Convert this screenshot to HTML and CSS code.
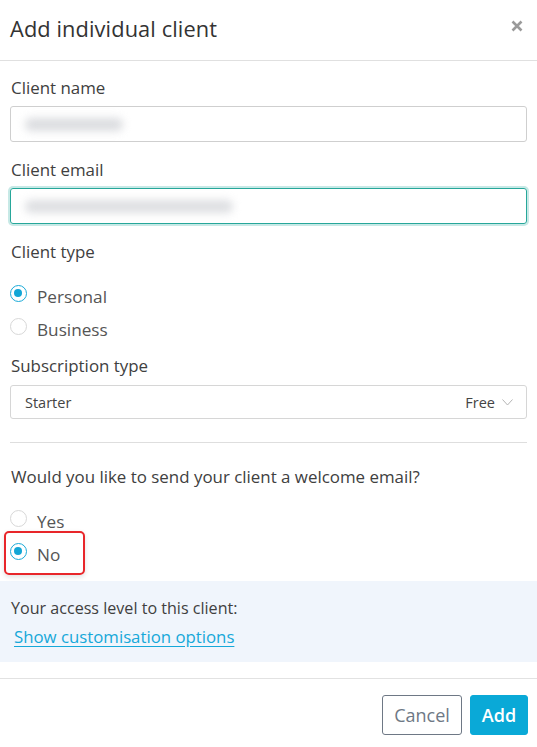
FILE: index.html
```html
<!DOCTYPE html>
<html>
<head>
<meta charset="utf-8">
<link rel="stylesheet" href="styles.css">
</head>
<body>
<div class="modal">
  <div class="header">
    <h1 class="title">Add individual client</h1>
    <svg class="close" width="12" height="12" viewBox="0 0 12 12"><path d="M1.5 1.5L10.5 10.5M10.5 1.5L1.5 10.5" stroke="#9a9a9a" stroke-width="2.6" stroke-linecap="butt"/></svg>
  </div>
  <div class="body">
    <div class="label first">Client name</div>
    <div class="input"><span class="blur short"></span></div>
    <div class="label">Client email</div>
    <div class="input focus"><span class="blur long"></span></div>
    <div class="label">Client type</div>
    <div class="radios">
      <div class="radio-row"><span class="radio on"></span><span class="rlabel">Personal</span></div>
      <div class="radio-row"><span class="radio"></span><span class="rlabel">Business</span></div>
    </div>
    <div class="label sub">Subscription type</div>
    <div class="select">
      <span class="sel-val">Starter</span>
      <span class="sel-right">Free <svg class="chev" width="11" height="7" viewBox="0 0 11 7"><path d="M0.5 0.5L5.5 6L10.5 0.5" fill="none" stroke="#b5b5b5" stroke-width="1"/></svg></span>
    </div>
    <div class="rule"></div>
    <div class="label question">Would you like to send your client a welcome email?</div>
    <div class="radios q">
      <div class="radio-row"><span class="radio"></span><span class="rlabel">Yes</span></div>
      <div class="radio-row marked"><span class="radio on"></span><span class="rlabel">No</span><span class="highlight"></span></div>
    </div>
    <div class="panel">
      <div class="panel-text">Your access level to this client:</div>
      <a class="link" href="#">Show customisation options</a>
    </div>
  </div>
  <div class="footer">
    <button class="btn cancel">Cancel</button>
    <button class="btn add">Add</button>
  </div>
</div>
</body>
</html>
```
FILE: styles.css
```css
* { box-sizing: border-box; }
html, body { margin: 0; padding: 0; background: #fff; }
body { font-family: "Open Sans", "Liberation Sans", sans-serif; color: #3a3a3a; }
.modal { width: 537px; height: 747px; background: #fff; }
.header {
  height: 61px;
  border-bottom: 1px solid #e0e0e0;
  display: flex;
  align-items: center;
  justify-content: space-between;
  padding: 0 14px 3px 10px;
}
.title { margin: 0; font-size: 21.8px; font-weight: 400; color: #333; letter-spacing: 0.1px; }
.close { margin-top: -6px; }
.body { padding: 0 10px; }
.label { font-size: 16.9px; line-height: 20px; height: 20px; margin-top: 18px; padding-left: 1px; color: #404040; }
.label.first { margin-top: 17px; }
.input {
  margin-top: 8px;
  height: 36px;
  border: 1px solid #cfcfcf;
  border-radius: 3px;
  display: flex;
  align-items: center;
  padding-left: 10px;
}
.input.focus { border-color: #27a79a; box-shadow: 0 0 0 2px #c7e9e6; }
.blur { display: block; height: 13px; background: #d2d4d8; border-radius: 6px; filter: blur(4px); }
.blur.short { width: 98px; margin-left: 4px; opacity: 0.8; }
.blur.long { width: 208px; margin-left: 4px; opacity: 0.75; }
.radios { margin-top: 18px; }
.radios.q { margin-top: 18px; }
.radio-row { height: 33px; display: flex; align-items: center; position: relative; }
.radio {
  width: 17px; height: 17px;
  border: 1px solid #d8d8d8;
  border-radius: 50%;
  margin-left: 0px;
  margin-top: -6px;
  position: relative;
  flex: none;
  background: #fff;
}
.radio.on { border: 1.5px solid #1aaad8; }
.radio.on::after {
  content: ""; position: absolute; left: 3px; top: 3px; width: 8px; height: 8px;
  border-radius: 50%; background: #12a6d6;
}
.rlabel { margin-left: 10px; font-size: 17.2px; color: #555; }
.label.sub { margin-top: 10px; }
.select {
  margin-top: 9px;
  height: 34px;
  border: 1px solid #d6d6d6;
  border-radius: 3px;
  display: flex;
  align-items: center;
  justify-content: space-between;
  padding: 0 13px 0 14px;
  font-size: 14.5px;
  color: #444;
}
.sel-right { display: flex; align-items: center; gap: 7px; }
.chev { margin-top: 1px; }
.rule { height: 1px; background: #dedede; margin-top: 23px; }
.label.question { margin-top: 24px; }
.marked .highlight {
  position: absolute;
  left: -6px; top: -7px;
  width: 81px; height: 44px;
  border: 2px solid #e8262a;
  border-radius: 5px;
  box-shadow: 0 2px 5px rgba(0,0,0,0.12);
}
.panel {
  margin: 10px -10px 0 -10px;
  background: #f0f5fc;
  height: 81px;
  padding: 17px 11px 0 11px;
}
.panel-text { font-size: 16.1px; line-height: 20px; color: #404040; }
.link {
  display: inline-block;
  margin-top: 9px;
  margin-left: 3px;
  font-size: 16.8px;
  line-height: 20px;
  color: #16a8d9;
  text-decoration: underline;
  text-underline-offset: 3px;
}
.footer {
  margin-top: 16px;
  border-top: 1px solid #e2e2e2;
  display: flex;
  justify-content: flex-end;
  gap: 8px;
  padding: 16px 9px 0 0;
}
.btn { font-family: inherit; font-size: 18px; height: 40px; border-radius: 3px; cursor: pointer; padding: 0; }
.cancel { width: 80px; background: #fff; border: 1px solid #6e7885; color: #6e7885; }
.add { width: 58px; background: #0aa9d7; border: 1px solid #0aa9d7; color: #fff; font-weight: 600; }
```
